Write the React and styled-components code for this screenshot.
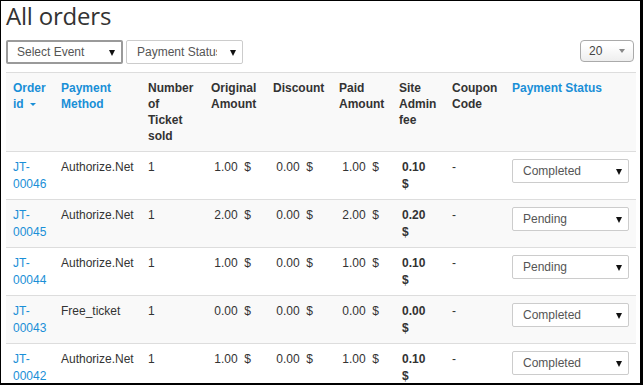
import React from 'react';
import styled, { createGlobalStyle } from 'styled-components';

const GlobalStyle = createGlobalStyle`
  html, body {
    margin: 0;
    padding: 0;
    background: #fff;
  }
  body {
    font-family: "Liberation Sans", Arial, sans-serif;
    font-size: 12px;
    color: #333;
  }
`;

const Frame = styled.div`
  box-sizing: border-box;
  width: 643px;
  height: 385px;
  border-style: solid;
  border-color: #000;
  border-width: 1px 3px 2px 1px;
  overflow: hidden;
`;

const Page = styled.div`
  padding: 2px 5px 0;
`;

const Title = styled.h1`
  margin: 0 0 11px;
  font-family: "Open Sans", "DejaVu Sans", sans-serif;
  font-weight: 400;
  font-size: 24px;
  line-height: 26px;
  color: #333;
  letter-spacing: -0.2px;
`;

const Toolbar = styled.div`
  display: flex;
  align-items: flex-start;
  gap: 3px;
  margin-bottom: 8px;
`;

const Spacer = styled.div`
  flex: 1;
`;

const SelectBox = styled.div`
  box-sizing: border-box;
  position: relative;
  display: flex;
  align-items: center;
  width: ${p => p.$width || 117}px;
  height: 24px;
  padding-left: 10px;
  border: ${p => (p.$focused ? '2px solid #9a9a9a' : '1px solid #ccc')};
  padding-left: ${p => (p.$focused ? 9 : 10)}px;
  border-radius: 2px;
  background: #fff;
  color: #555;
  font-size: 12px;
`;

const SelectLabel = styled.span`
  display: block;
  width: 80px;
  overflow: hidden;
  white-space: nowrap;
`;

const Arrow = styled.span`
  position: absolute;
  right: 6px;
  top: 50%;
  margin-top: -2px;
  width: 0;
  height: 0;
  border-left: 3.5px solid transparent;
  border-right: 3.5px solid transparent;
  border-top: 6px solid #111;
`;

const PageSize = styled.div`
  box-sizing: border-box;
  position: relative;
  width: 54px;
  height: 22px;
  margin-right: 1px;
  padding: 3px 0 0 8px;
  border: 1px solid #aaa;
  border-radius: 4px;
  background: linear-gradient(#fff 20%, #eee 100%);
  color: #444;
  font-size: 12px;
  line-height: 15px;
`;

const SmallArrow = styled.span`
  position: absolute;
  right: 8px;
  top: 8px;
  width: 0;
  height: 0;
  border-left: 3px solid transparent;
  border-right: 3px solid transparent;
  border-top: 4px solid #888;
`;

const Table = styled.table`
  width: 630px;
  table-layout: fixed;
  border-collapse: collapse;
  border-top: 1px solid #ddd;
`;

const HeadRow = styled.tr`
  background: #f9f9f9;
`;

const HeadCell = styled.th`
  padding: 7px;
  text-align: left;
  vertical-align: top;
  font-weight: 700;
  line-height: 16px;
  color: ${p => (p.$link ? '#1a8fd7' : '#333')};
`;

const SortCaret = styled.span`
  display: inline-block;
  margin-left: 6px;
  vertical-align: middle;
  width: 0;
  height: 0;
  border-left: 3px solid transparent;
  border-right: 3px solid transparent;
  border-top: 3px solid #1a8fd7;
`;

const Row = styled.tr`
  background: ${p => (p.$striped ? '#f9f9f9' : '#fff')};
`;

const Cell = styled.td`
  padding: 7px;
  vertical-align: top;
  line-height: 16.5px;
  border-top: 1px solid #ddd;
  color: #333;
`;

const OrderLink = styled.a`
  color: #1a8fd7;
  text-decoration: none;
`;

const Fee = styled.span`
  display: inline-block;
  width: 30px;
  padding-left: 3px;
  font-weight: 700;
`;

const widths = [48, 87, 63, 62, 66, 60, 53, 60, 131];

const headers = [
  { label: 'Order id', link: true, sorted: true },
  { label: 'Payment Method', link: true },
  { label: 'Number of Ticket sold' },
  { label: 'Original Amount' },
  { label: 'Discount' },
  { label: 'Paid Amount' },
  { label: 'Site Admin fee' },
  { label: 'Coupon Code' },
  { label: 'Payment Status', link: true },
];

const orders = [
  { id: 'JT-00046', method: 'Authorize.Net', tickets: 1, original: '1.00', discount: '0.00', paid: '1.00', fee: '0.10', status: 'Completed' },
  { id: 'JT-00045', method: 'Authorize.Net', tickets: 1, original: '2.00', discount: '0.00', paid: '2.00', fee: '0.20', status: 'Pending' },
  { id: 'JT-00044', method: 'Authorize.Net', tickets: 1, original: '1.00', discount: '0.00', paid: '1.00', fee: '0.10', status: 'Pending' },
  { id: 'JT-00043', method: 'Free_ticket', tickets: 1, original: '0.00', discount: '0.00', paid: '0.00', fee: '0.00', status: 'Completed' },
  { id: 'JT-00042', method: 'Authorize.Net', tickets: 1, original: '1.00', discount: '0.00', paid: '1.00', fee: '0.10', status: 'Completed' },
];

const money = v => `\u00a0${v}\u00a0 $`;

export default function App() {
  return (
    <>
      <GlobalStyle />
      <Frame>
        <Page>
          <Title>All orders</Title>
          <Toolbar>
            <SelectBox $focused>
              <SelectLabel>Select Event</SelectLabel>
              <Arrow />
            </SelectBox>
            <SelectBox>
              <SelectLabel>Payment Status</SelectLabel>
              <Arrow />
            </SelectBox>
            <Spacer />
            <PageSize>
              20
              <SmallArrow />
            </PageSize>
          </Toolbar>
          <Table>
            <colgroup>
              {widths.map((w, i) => <col key={i} style={{ width: w }} />)}
            </colgroup>
            <thead>
              <HeadRow>
                {headers.map((h, i) => (
                  <HeadCell key={i} $link={h.link}>
                    {h.label}
                    {h.sorted && <SortCaret />}
                  </HeadCell>
                ))}
              </HeadRow>
            </thead>
            <tbody>
              {orders.map((o, i) => (
                <Row key={o.id} $striped={i % 2 === 1}>
                  <Cell><OrderLink href="#">{o.id}</OrderLink></Cell>
                  <Cell>{o.method}</Cell>
                  <Cell>{o.tickets}</Cell>
                  <Cell>{money(o.original)}</Cell>
                  <Cell>{money(o.discount)}</Cell>
                  <Cell>{money(o.paid)}</Cell>
                  <Cell><Fee>{o.fee} $</Fee></Cell>
                  <Cell>-</Cell>
                  <Cell>
                    <SelectBox>
                      <SelectLabel>{o.status}</SelectLabel>
                      <Arrow />
                    </SelectBox>
                  </Cell>
                </Row>
              ))}
            </tbody>
          </Table>
        </Page>
      </Frame>
    </>
  );
}
